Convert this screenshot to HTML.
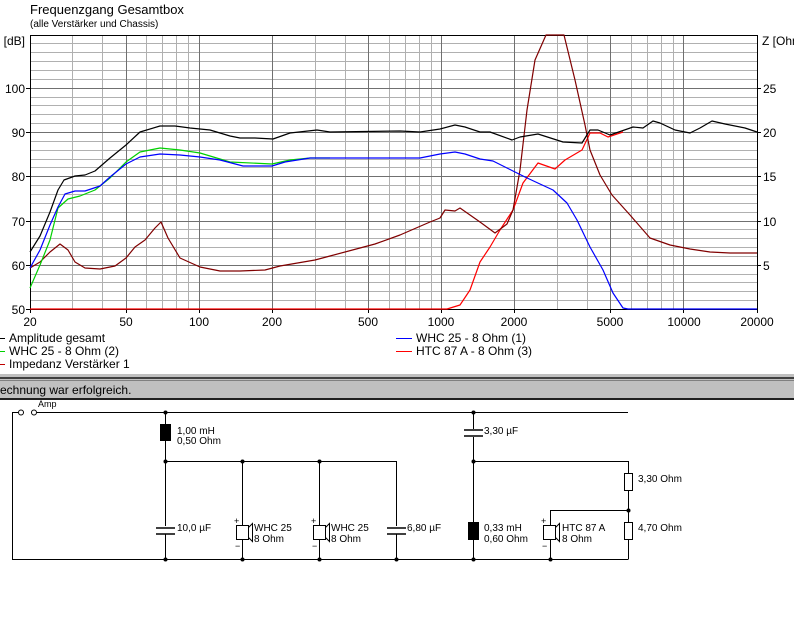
<!DOCTYPE html>
<html><head><meta charset="utf-8"><style>
html,body{margin:0;padding:0;background:#fff;width:794px;height:617px;overflow:hidden}
svg{display:block;font-family:"Liberation Sans",Arial,sans-serif}
</style></head><body>
<svg width="794" height="617" viewBox="0 0 794 617" xmlns="http://www.w3.org/2000/svg">
<rect width="794" height="617" fill="#fff"/>
<text x="30" y="14" font-size="13">Frequenzgang Gesamtbox</text>
<text x="30" y="27" font-size="10">(alle Verstärker und Chassis)</text>
<!-- grid -->
<g stroke="#b0b0b0" stroke-width="1" shape-rendering="crispEdges">
<line x1="30" x2="757" y1="43.5" y2="43.5"/><line x1="30" x2="757" y1="52.5" y2="52.5"/><line x1="30" x2="757" y1="61.5" y2="61.5"/><line x1="30" x2="757" y1="70.5" y2="70.5"/><line x1="30" x2="757" y1="79.5" y2="79.5"/>
<line x1="30" x2="757" y1="97.5" y2="97.5"/><line x1="30" x2="757" y1="105.5" y2="105.5"/><line x1="30" x2="757" y1="114.5" y2="114.5"/><line x1="30" x2="757" y1="123.5" y2="123.5"/>
<line x1="30" x2="757" y1="141.5" y2="141.5"/><line x1="30" x2="757" y1="150.5" y2="150.5"/><line x1="30" x2="757" y1="159.5" y2="159.5"/><line x1="30" x2="757" y1="167.5" y2="167.5"/>
<line x1="30" x2="757" y1="185.5" y2="185.5"/><line x1="30" x2="757" y1="194.5" y2="194.5"/><line x1="30" x2="757" y1="203.5" y2="203.5"/><line x1="30" x2="757" y1="212.5" y2="212.5"/>
<line x1="30" x2="757" y1="229.5" y2="229.5"/><line x1="30" x2="757" y1="238.5" y2="238.5"/><line x1="30" x2="757" y1="247.5" y2="247.5"/><line x1="30" x2="757" y1="256.5" y2="256.5"/>
<line x1="30" x2="757" y1="274.5" y2="274.5"/><line x1="30" x2="757" y1="282.5" y2="282.5"/><line x1="30" x2="757" y1="291.5" y2="291.5"/><line x1="30" x2="757" y1="300.5" y2="300.5"/>
<line x1="72.5" x2="72.5" y1="35" y2="309"/><line x1="102.5" x2="102.5" y1="35" y2="309"/><line x1="146.5" x2="146.5" y1="35" y2="309"/><line x1="162.5" x2="162.5" y1="35" y2="309"/><line x1="176.5" x2="176.5" y1="35" y2="309"/><line x1="188.5" x2="188.5" y1="35" y2="309"/>
<line x1="315.5" x2="315.5" y1="35" y2="309"/><line x1="345.5" x2="345.5" y1="35" y2="309"/><line x1="389.5" x2="389.5" y1="35" y2="309"/><line x1="405.5" x2="405.5" y1="35" y2="309"/><line x1="419.5" x2="419.5" y1="35" y2="309"/><line x1="431.5" x2="431.5" y1="35" y2="309"/>
<line x1="557.5" x2="557.5" y1="35" y2="309"/><line x1="587.5" x2="587.5" y1="35" y2="309"/><line x1="631.5" x2="631.5" y1="35" y2="309"/><line x1="647.5" x2="647.5" y1="35" y2="309"/><line x1="661.5" x2="661.5" y1="35" y2="309"/><line x1="673.5" x2="673.5" y1="35" y2="309"/>
</g>
<g stroke="#707070" stroke-width="1" shape-rendering="crispEdges">
<line x1="30" x2="757" y1="88.5" y2="88.5"/><line x1="30" x2="757" y1="132.5" y2="132.5"/><line x1="30" x2="757" y1="176.5" y2="176.5"/><line x1="30" x2="757" y1="221.5" y2="221.5"/><line x1="30" x2="757" y1="265.5" y2="265.5"/>
<line x1="126.5" x2="126.5" y1="35" y2="309"/><line x1="199.5" x2="199.5" y1="35" y2="309"/><line x1="272.5" x2="272.5" y1="35" y2="309"/><line x1="368.5" x2="368.5" y1="35" y2="309"/><line x1="441.5" x2="441.5" y1="35" y2="309"/><line x1="514.5" x2="514.5" y1="35" y2="309"/><line x1="610.5" x2="610.5" y1="35" y2="309"/><line x1="683.5" x2="683.5" y1="35" y2="309"/>
</g>
<g stroke="#000" stroke-width="1" shape-rendering="crispEdges" fill="none">
<line x1="30.5" x2="30.5" y1="35" y2="310"/><line x1="30" x2="757" y1="35.5" y2="35.5"/><line x1="757.5" x2="757.5" y1="35" y2="310"/><line x1="30" x2="757" y1="309.5" y2="309.5"/>
<line x1="26" x2="30" y1="88.5" y2="88.5"/><line x1="26" x2="30" y1="132.5" y2="132.5"/><line x1="26" x2="30" y1="176.5" y2="176.5"/><line x1="26" x2="30" y1="221.5" y2="221.5"/><line x1="26" x2="30" y1="265.5" y2="265.5"/><line x1="26" x2="30" y1="309.5" y2="309.5"/>
<line x1="757" x2="761" y1="88.5" y2="88.5"/><line x1="757" x2="761" y1="132.5" y2="132.5"/><line x1="757" x2="761" y1="176.5" y2="176.5"/><line x1="757" x2="761" y1="221.5" y2="221.5"/><line x1="757" x2="761" y1="265.5" y2="265.5"/>
<line x1="30.5" x2="30.5" y1="309" y2="313"/><line x1="126.5" x2="126.5" y1="309" y2="313"/><line x1="199.5" x2="199.5" y1="309" y2="313"/><line x1="272.5" x2="272.5" y1="309" y2="313"/><line x1="368.5" x2="368.5" y1="309" y2="313"/><line x1="441.5" x2="441.5" y1="309" y2="313"/><line x1="514.5" x2="514.5" y1="309" y2="313"/><line x1="610.5" x2="610.5" y1="309" y2="313"/><line x1="683.5" x2="683.5" y1="309" y2="313"/><line x1="757.5" x2="757.5" y1="309" y2="313"/>
</g>
<g font-size="12" text-anchor="end">
<text x="25" y="45">[dB]</text><text x="25" y="93">100</text><text x="25" y="137">90</text><text x="25" y="181">80</text><text x="25" y="226">70</text><text x="25" y="270">60</text><text x="25" y="314">50</text>
</g>
<g font-size="12">
<text x="762" y="45">Z [Ohm</text><text x="763" y="93">25</text><text x="763" y="137">20</text><text x="763" y="181">15</text><text x="763" y="226">10</text><text x="763" y="270">5</text>
</g>
<g font-size="12" text-anchor="middle">
<text x="30" y="326">20</text><text x="126" y="326">50</text><text x="199" y="326">100</text><text x="272" y="326">200</text><text x="368" y="326">500</text><text x="441" y="326">1000</text><text x="514" y="326">2000</text><text x="610" y="326">5000</text><text x="684" y="326">10000</text><text x="757" y="326">20000</text>
</g>
<!-- curves -->
<g fill="none" stroke-width="1.2" stroke-linejoin="round">
<polyline stroke="#f00" points="30,309 447,309 460,305 470,290 480,262 490,247 500,230 513,210 523,183 538,163 555,169 565,160 582,150 590,133 600,133 608,137 623,132"/>
<polyline stroke="#800000" points="30,268 40,262 50,252 60,244 68,250 75,262 85,268 100,269 115,266 126,258 135,247 145,240 155,228 161,222 168,238 180,258 200,267 220,271 240,271 265,270 280,266 315,260 330,256 360,248 375,244 400,235 430,222 440,218 445,210 455,211 460,208 470,215 480,222 495,233 507,224 513,210 520,170 527,110 535,60 546,35 564,35 575,80 585,125 590,150 600,175 612,195 630,215 650,238 670,245 690,249 710,252 730,253 757,253"/>
<polyline stroke="#00d000" points="30,288 40,265 50,240 58,208 68,199 80,196 95,190 110,178 126,162 140,152 160,148 180,150 200,153 230,162 272,164 290,160 310,158 330,158"/>
<polyline stroke="#0000ff" points="30,268 40,250 50,225 58,207 65,194 75,191 85,191 100,186 110,177 126,164 140,157 160,154 180,155 200,157 220,160 243,166 272,166 285,162 310,158 330,158 420,158 440,154 455,152 465,154 480,159 493,161 525,177 540,184 553,190 567,203 577,220 590,247 603,270 613,293 623,308 628,309 757,309"/>
<polyline stroke="#000" points="30,252 40,236 50,212 58,190 64,180 75,176 85,175 95,171 110,158 126,145 140,132 160,126 175,126 190,128 210,130 230,136 240,138 255,138 273,139 290,133 317,130 330,132 400,131 420,132 440,129 455,125 465,127 480,132 490,132 512,140 520,137 538,134 563,142 582,143 590,130 598,130 610,135 633,127 643,128 653,121 660,123 675,130 690,133 700,128 712,121 725,124 745,128 757,132"/>
</g>
<!-- legend -->
<g font-size="12">
<line x1="0" x2="5" y1="338.5" y2="338.5" stroke="#000"/><text x="9" y="342">Amplitude gesamt</text>
<line x1="0" x2="5" y1="351.5" y2="351.5" stroke="#00d000"/><text x="9" y="355">WHC 25 - 8 Ohm (2)</text>
<line x1="0" x2="5" y1="364.5" y2="364.5" stroke="#c00000"/><text x="9" y="368">Impedanz Verstärker 1</text>
<line x1="396" x2="412" y1="338.5" y2="338.5" stroke="#0000ff"/><text x="416" y="342">WHC 25 - 8 Ohm (1)</text>
<line x1="396" x2="412" y1="351.5" y2="351.5" stroke="#f00"/><text x="416" y="355">HTC 87 A - 8 Ohm (3)</text>
</g>
<!-- status bar -->
<rect x="0" y="374" width="794" height="3" fill="#c0c0c0"/>
<rect x="0" y="377" width="794" height="2" fill="#404040"/>
<rect x="0" y="379" width="794" height="20" fill="#c0c0c0"/>
<rect x="0" y="380" width="794" height="1" fill="#808080"/>
<rect x="0" y="398" width="794" height="2" fill="#202020"/>
<text x="0" y="394" font-size="12">echnung war erfolgreich.</text>
<!-- circuit -->
<g stroke="#000" stroke-width="1" fill="none" shape-rendering="crispEdges">
<polyline points="12.5,412.5 12.5,559.5 628.5,559.5"/>
<line x1="12" x2="18" y1="412.5" y2="412.5"/>
<line x1="37" x2="628" y1="412.5" y2="412.5"/>
<line x1="165.5" x2="165.5" y1="412" y2="559"/>
<line x1="165" x2="396" y1="461.5" y2="461.5"/>
<line x1="242.5" x2="242.5" y1="461" y2="559"/>
<line x1="319.5" x2="319.5" y1="461" y2="559"/>
<line x1="396.5" x2="396.5" y1="461" y2="559"/>
<line x1="473.5" x2="473.5" y1="412" y2="559"/>
<polyline points="473,461.5 628.5,461.5 628.5,559"/>
<polyline points="628,510.5 550.5,510.5 550.5,559"/>
</g>
<g fill="#fff" stroke="#000">
<circle cx="21" cy="412.5" r="2.5"/><circle cx="34" cy="412.5" r="2.5"/>
<rect x="156" y="526" width="19" height="8" stroke="none"/>
<rect x="387" y="526" width="19" height="8" stroke="none"/>
<rect x="464" y="429" width="19" height="8" stroke="none"/>
<rect x="624.5" y="473.5" width="8" height="17"/>
<rect x="624.5" y="522.5" width="8" height="17"/>
</g>
<g stroke="#000" stroke-width="1.4">
<line x1="156" x2="175" y1="528" y2="528"/><line x1="156" x2="175" y1="534" y2="534"/>
<line x1="387" x2="406" y1="528" y2="528"/><line x1="387" x2="406" y1="534" y2="534"/>
<line x1="464" x2="483" y1="430" y2="430"/><line x1="464" x2="483" y1="436" y2="436"/>
</g>
<rect x="160" y="424" width="11" height="17" fill="#000"/>
<rect x="468" y="522" width="11" height="18" fill="#000"/>
<!-- speakers -->
<g stroke="#000" fill="#fff">
<rect x="236.5" y="525.5" width="12" height="14"/><polyline points="248.5,527.5 252.5,523.5 252.5,541.5 248.5,537.5" fill="none"/>
<rect x="313.5" y="525.5" width="12" height="14"/><polyline points="325.5,527.5 329.5,523.5 329.5,541.5 325.5,537.5" fill="none"/>
<rect x="543.5" y="525.5" width="12" height="14"/><polyline points="555.5,527.5 559.5,523.5 559.5,541.5 555.5,537.5" fill="none"/>
</g>
<g fill="#000">
<circle cx="165.5" cy="412.5" r="2"/><circle cx="473.5" cy="412.5" r="2"/>
<circle cx="165.5" cy="461.5" r="2"/><circle cx="242.5" cy="461.5" r="2"/><circle cx="319.5" cy="461.5" r="2"/><circle cx="473.5" cy="461.5" r="2"/>
<circle cx="628.5" cy="510.5" r="2"/>
<circle cx="165.5" cy="559.5" r="2"/><circle cx="242.5" cy="559.5" r="2"/><circle cx="319.5" cy="559.5" r="2"/><circle cx="396.5" cy="559.5" r="2"/><circle cx="473.5" cy="559.5" r="2"/><circle cx="550.5" cy="559.5" r="2"/>
</g>
<g font-size="10">
<text x="38" y="407" font-size="9">Amp</text>
<text x="177" y="434">1,00 mH</text><text x="177" y="444">0,50 Ohm</text>
<text x="177" y="531">10,0 µF</text>
<text x="234" y="524" font-size="9">+</text><text x="235" y="549" font-size="9">−</text>
<text x="254" y="531">WHC 25</text><text x="254" y="542">8 Ohm</text>
<text x="311" y="524" font-size="9">+</text><text x="312" y="549" font-size="9">−</text>
<text x="331" y="531">WHC 25</text><text x="331" y="542">8 Ohm</text>
<text x="407" y="531">6,80 µF</text>
<text x="484" y="434">3,30 µF</text>
<text x="484" y="531">0,33 mH</text><text x="484" y="542">0,60 Ohm</text>
<text x="541" y="524" font-size="9">+</text><text x="542" y="549" font-size="9">−</text>
<text x="562" y="531">HTC 87 A</text><text x="562" y="542">8 Ohm</text>
<text x="638" y="482">3,30 Ohm</text>
<text x="638" y="531">4,70 Ohm</text>
</g>
</svg>
</body></html>
